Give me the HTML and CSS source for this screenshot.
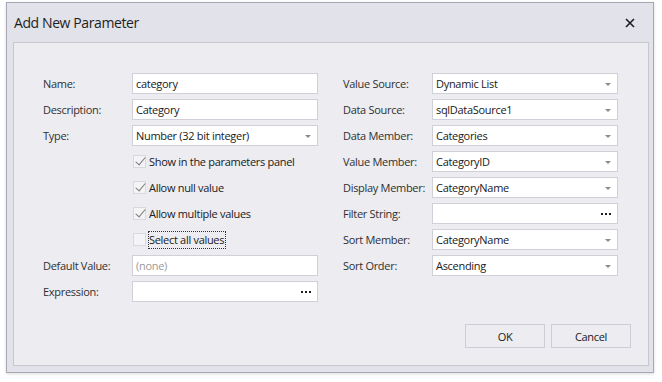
FILE: index.html
```html
<!DOCTYPE html>
<html lang="en">
  <head>
    <meta charset="UTF-8" />
    <title>Add New Parameter</title>
    <link rel="stylesheet" href="styles.css">
  </head>
  <body>
    <div class="dialog">
      <div class="titlebar">
        <span class="title">Add New Parameter</span>
        <span class="close">
          <svg width="10" height="10" viewBox="0 0 10 10">
            <path d="M1 1 L9 9 M9 1 L1 9" stroke="#1e1e1e" stroke-width="1.6" />
          </svg>
        </span>
      </div>
      <div class="panel">
        <div class="form">
          <div class="col">
            <label class="lbl">Name:</label>
            <div class="edit">category</div>

            <label class="lbl">Description:</label>
            <div class="edit">Category</div>

            <label class="lbl">Type:</label>
            <div class="edit combo">Number (32 bit integer)<span class="arrow"></span></div>

            <div class="check"><span class="box checked"></span><span>Show in the parameters panel</span></div>
            <div class="check"><span class="box checked"></span><span>Allow null value</span></div>
            <div class="check"><span class="box checked"></span><span>Allow multiple values</span></div>
            <div class="check"><span class="box"></span><span class="focus">Select all values</span></div>

            <label class="lbl">Default Value:</label>
            <div class="edit placeholder">(none)</div>

            <label class="lbl">Expression:</label>
            <div class="edit button-edit"><span class="dots"><i></i><i></i><i></i></span></div>
          </div>

          <div class="col">
            <label class="lbl">Value Source:</label>
            <div class="edit combo">Dynamic List<span class="arrow"></span></div>

            <label class="lbl">Data Source:</label>
            <div class="edit combo">sqlDataSource1<span class="arrow"></span></div>

            <label class="lbl">Data Member:</label>
            <div class="edit combo">Categories<span class="arrow"></span></div>

            <label class="lbl">Value Member:</label>
            <div class="edit combo">CategoryID<span class="arrow"></span></div>

            <label class="lbl">Display Member:</label>
            <div class="edit combo">CategoryName<span class="arrow"></span></div>

            <label class="lbl">Filter String:</label>
            <div class="edit button-edit"><span class="dots"><i></i><i></i><i></i></span></div>

            <label class="lbl">Sort Member:</label>
            <div class="edit combo">CategoryName<span class="arrow"></span></div>

            <label class="lbl">Sort Order:</label>
            <div class="edit combo">Ascending<span class="arrow"></span></div>
          </div>
        </div>

        <div class="buttons">
          <button class="btn">OK</button>
          <button class="btn">Cancel</button>
        </div>
      </div>
    </div>
  </body>
</html>
```

FILE: styles.css
```css
html,
body {
  margin: 0;
  background: #ffffff;
}
body {
  padding: 2px 8px 9px 6px;
  font-family: "Open Sans", "Noto Sans", sans-serif;
  font-size: 11px;
  letter-spacing: -0.3px;
  color: #202020;
}
.dialog {
  width: 646px;
  height: 369px;
  border: 1px solid #a8a8b4;
  background: #e2e2ea;
  display: flex;
  flex-direction: column;
  box-shadow: 0 1px 3px rgba(0, 0, 0, 0.15);
}
.titlebar {
  height: 39px;
  display: flex;
  align-items: center;
  justify-content: space-between;
  padding: 0 18px 0 7px;
}
.title {
  font-size: 14px;
  letter-spacing: -0.4px;
  color: #1e1e1e;
}
.close {
  display: flex;
}
.panel {
  flex: 1;
  margin: 0 4px 6px 6px;
  border: 1px solid #c6c6d0;
  background: #ececf1;
  display: flex;
  flex-direction: column;
  justify-content: space-between;
  padding: 30px 17px 17px 29px;
}
.form {
  display: grid;
  grid-template-columns: 275px 275px;
  column-gap: 25px;
}
.col {
  display: grid;
  grid-template-columns: 89px 186px;
  grid-auto-rows: 21px;
  row-gap: 5px;
  align-items: center;
}
.lbl {
  color: #303030;
  white-space: nowrap;
}
.edit {
  height: 21px;
  box-sizing: border-box;
  border: 1px solid #d0d0d8;
  background: #ffffff;
  padding: 0 0 0 3px;
  display: flex;
  align-items: center;
  position: relative;
  white-space: nowrap;
}
.placeholder {
  color: #9a9a9a;
}
.arrow {
  position: absolute;
  right: 6px;
  top: 9px;
  border-left: 3px solid transparent;
  border-right: 3px solid transparent;
  border-top: 3px solid #8a8a8a;
}
.button-edit {
  justify-content: flex-end;
  padding-right: 6px;
}
.dots {
  display: flex;
  gap: 2px;
}
.dots i {
  width: 2px;
  height: 2px;
  background: #1e1e1e;
}
.check {
  grid-column: 2;
  display: flex;
  align-items: center;
  gap: 3px;
  margin-left: 1px;
}
.box {
  width: 13px;
  height: 13px;
  box-sizing: border-box;
  border: 1px solid #d8d8de;
  background: #f4f4f7;
  position: relative;
}
.box.checked::after {
  content: "";
  position: absolute;
  left: 4px;
  top: -1px;
  width: 4px;
  height: 9px;
  border-right: 1.2px solid #7a7a7a;
  border-bottom: 1.2px solid #7a7a7a;
  transform: rotate(40deg);
}
.focus {
  outline: 1px dotted #333;
  outline-offset: 0;
  padding: 0 1px 1px 0;
}
.buttons {
  display: flex;
  justify-content: flex-end;
  gap: 6px;
}
.btn {
  width: 80px;
  height: 24px;
  border: 1px solid #cdcdd5;
  background: #ececf1;
  font-family: inherit;
  font-size: 11px;
  letter-spacing: -0.3px;
  color: #202020;
}
```
